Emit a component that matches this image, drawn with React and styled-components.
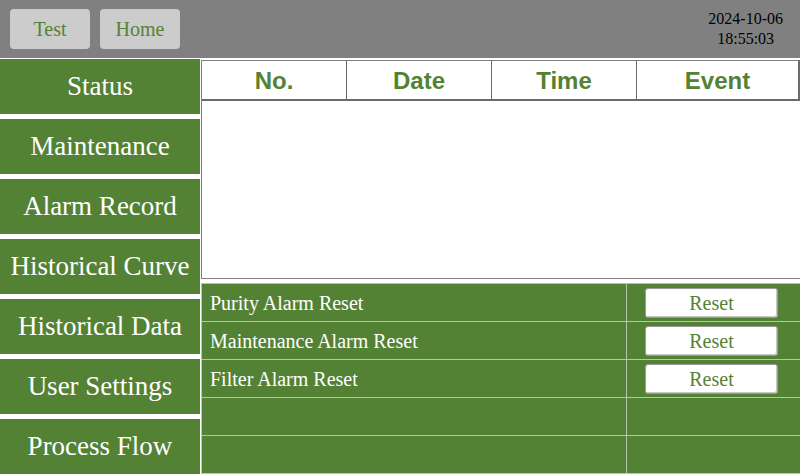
import { createGlobalStyle } from "styled-components";
import styled from "styled-components";

// palette taken from the panel screenshot
const GREEN = "#548235";
const GRAY = "#808080";

const GlobalStyle = createGlobalStyle`
  html, body {
    margin: 0;
    padding: 0;
    width: 800px;
    height: 474px;
    overflow: hidden;
    background: #ffffff;
    font-family: "Liberation Serif", "Times New Roman", serif;
  }
`;

const Screen = styled.div`
  width: 800px;
  height: 474px;
  display: flex;
  flex-direction: column;
  gap: 1px;
`;

const TopBar = styled.header`
  height: 58px;
  box-sizing: border-box;
  background: ${GRAY};
  display: flex;
  align-items: center;
  gap: 10px;
  padding: 0 17px 0 10px;
`;

const TopButton = styled.button`
  width: 80px;
  height: 40px;
  border: none;
  border-radius: 4px;
  background: #cccccc;
  color: ${GREEN};
  font-family: "Liberation Serif", serif;
  font-size: 20px;
  padding: 0;
  cursor: pointer;
`;

const Clock = styled.div`
  margin-left: auto;
  text-align: center;
  color: #000000;
  font-size: 16px;
  line-height: 20px;
`;

const Body = styled.div`
  flex: 1;
  display: flex;
  gap: 1px;
  min-height: 0;
`;

const SideNav = styled.nav`
  width: 200px;
  display: flex;
  flex-direction: column;
  gap: 5px;
`;

const NavItem = styled.div`
  height: 55px;
  background: ${GREEN};
  color: #ffffff;
  font-size: 27px;
  display: flex;
  align-items: center;
  justify-content: center;
  white-space: nowrap;
`;

const Main = styled.main`
  flex: 1;
  display: flex;
  flex-direction: column;
  padding-top: 1px;
  gap: 4px;
`;

const EventPanel = styled.section`
  height: 220px;
  box-sizing: border-box;
  border-left: 1px solid ${GRAY};
  border-bottom: 1px solid ${GRAY};
`;

const HeadRow = styled.div`
  display: grid;
  grid-template-columns: 145px 145px 145px 1fr;
  height: 41px;
`;

const HeadCell = styled.div`
  box-sizing: border-box;
  border-top: 1px solid ${GRAY};
  border-bottom: 2px solid #6a6a6a;
  border-right: ${(p) => (p.$last ? "2px" : "1px")} solid #6a6a6a;
  display: flex;
  align-items: center;
  justify-content: center;
  padding-top: 2px;
  color: ${GREEN};
  font-family: "Liberation Sans", Arial, sans-serif;
  font-weight: bold;
  font-size: 24px;
`;

const ResetTable = styled.section`
  flex: 1;
  background: ${GREEN};
  border-top: 1px solid #b4c7a7;
  border-left: 1px solid #b4c7a7;
  display: flex;
  flex-direction: column;
`;

const ResetRow = styled.div`
  height: 38px;
  box-sizing: border-box;
  border-bottom: 1px solid #b4c7a7;
  display: grid;
  grid-template-columns: 425px 1fr;
`;

const Label = styled.div`
  border-right: 1px solid #b4c7a7;
  color: #ffffff;
  font-size: 20px;
  padding: 2px 0 0 8px;
  display: flex;
  align-items: center;
  white-space: nowrap;
`;

const Action = styled.div`
  display: flex;
  align-items: center;
  padding-left: 18px;
`;

const ResetButton = styled.button`
  width: 133px;
  height: 30px;
  margin-top: 1px;
  background: #ffffff;
  border: 1px solid #999999;
  border-radius: 3px;
  box-shadow: inset -1px -1px 0 #c8c8c8;
  color: ${GREEN};
  font-family: "Liberation Serif", serif;
  font-size: 20px;
  padding: 1px 0 0;
  cursor: pointer;
`;

const navItems = [
  "Status",
  "Maintenance",
  "Alarm Record",
  "Historical Curve",
  "Historical Data",
  "User Settings",
  "Process Flow",
];

const columns = ["No.", "Date", "Time", "Event"];

const resets = ["Purity Alarm Reset", "Maintenance Alarm Reset", "Filter Alarm Reset", "", ""];

function App() {
  return (
    <Screen>
      <GlobalStyle />
      <TopBar>
        <TopButton>Test</TopButton>
        <TopButton>Home</TopButton>
        <Clock>
          2024-10-06
          <br />
          18:55:03
        </Clock>
      </TopBar>
      <Body>
        <SideNav>
          {navItems.map((item) => (
            <NavItem key={item}>{item}</NavItem>
          ))}
        </SideNav>
        <Main>
          <EventPanel>
            <HeadRow>
              {columns.map((c, i) => (
                <HeadCell key={c} $last={i === columns.length - 1}>
                  {c}
                </HeadCell>
              ))}
            </HeadRow>
          </EventPanel>
          <ResetTable>
            {resets.map((label, i) => (
              <ResetRow key={i}>
                <Label>{label}</Label>
                <Action>{label && <ResetButton>Reset</ResetButton>}</Action>
              </ResetRow>
            ))}
          </ResetTable>
        </Main>
      </Body>
    </Screen>
  );
}

export default App;
